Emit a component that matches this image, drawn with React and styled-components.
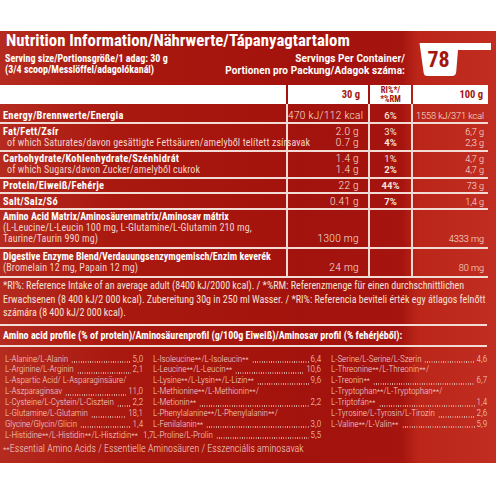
import React from 'react';
import styled, { createGlobalStyle } from 'styled-components';

const Global = createGlobalStyle`
  html, body { margin: 0; background: #fff; }
`;

const condensed = `
  font-family: Roboto, "Open Sans", "Liberation Sans", sans-serif;
  font-stretch: 75%;
`;

const LINE = '#f3dbd5';
const DARK = '#a3150f';

const Page = styled.div`
  width: 496px;
  height: 496px;
  padding-top: 31px;
  box-sizing: border-box;
  background: #fff;
`;

const Panel = styled.div`
  height: 432px;
  overflow: hidden;
  color: #fff;
  ${condensed};
  background: linear-gradient(
    90deg,
    #b52b20 0px,
    #aa190f 110px,
    #a3130d 300px,
    #a5140e 402px,
    #bb2619 418px,
    #c12d21 496px
  );
`;

const Header = styled.header`
  display: flex;
  align-items: flex-start;
  gap: 12px;
`;

const HeaderText = styled.div`
  width: 405px;
  flex: none;
`;

const Title = styled.h1`
  margin: 0;
  padding-left: 6px;
  font-size: 16.8px;
  line-height: 18px;
  font-weight: 700;
  white-space: nowrap;
`;

const ServingRow = styled.div`
  display: flex;
  justify-content: space-between;
  margin-top: 4px;
  padding-left: 5px;
  font-size: 10px;
  line-height: 11px;
  font-weight: 700;
  white-space: nowrap;
`;

const Servings = styled.div`
  text-align: right;
  font-stretch: 100%;
  font-size: 10px;
  line-height: 12px;
  letter-spacing: 0.1px;
`;

const Scoop = styled.div`
  position: relative;
  flex: none;
  width: 76px;
  height: 36px;
  margin-top: 11px;

  svg {
    display: block;
  }
`;

const Count = styled.span`
  position: absolute;
  left: 3px;
  top: 0;
  width: 37px;
  line-height: 35px;
  text-align: center;
  color: ${DARK};
  font-size: 22px;
  font-weight: 700;
`;

const Table = styled.div`
  width: 488px;
  margin-top: 7px;
  border-bottom: 2px solid ${LINE};
`;

const Row = styled.div`
  display: grid;
  grid-template-columns: 286px 82px 43px 77px;
  height: ${p => p.$h}px;
  border-top: ${p => (p.$first ? 'none' : `2px solid ${LINE}`)};
  box-sizing: content-box;
`;

const HeadCell = styled.div`
  background: #fff;
  background-clip: padding-box;
  border-left: ${p => (p.$first ? 0 : '2px solid transparent')};
  color: ${DARK};
  font-size: 10.5px;
  line-height: 19px;
  font-weight: 700;
  text-align: ${p => p.$align || 'right'};
  padding-right: ${p => p.$pr || 0}px;
`;

const RiHead = styled.div`
  padding-top: 0.5px;
  font-size: 8.6px;
  line-height: 9.2px;
  text-align: center;
`;

const Cell = styled.div`
  border-left: ${p => (p.$first ? 0 : `2px solid ${LINE}`)};
  padding-top: ${p => p.$pt}px;
  padding-right: ${p => p.$pr || 0}px;
  padding-left: ${p => p.$pl || 0}px;
  text-align: ${p => p.$align || 'right'};
  line-height: 11px;
  white-space: nowrap;
`;

const LabelLine = styled.div`
  height: 11px;
  font-size: ${p => (p.$main ? 10.4 : 10)}px;
  font-weight: ${p => (p.$bold ? 700 : 400)};
  letter-spacing: ${p => (p.$main ? 0.25 : p.$bold ? 0 : 0.12)}px;
  color: ${p => (p.$bold ? '#fff' : '#f3d3cc')};
  padding-left: ${p => (p.$indent ? 4 : 0)}px;
`;

const Value = styled.div`
  height: 11px;
  font-family: Roboto, "Liberation Sans", sans-serif;
  font-stretch: 100%;
  font-size: ${p => (p.$narrow ? 9.2 : 10)}px;
  letter-spacing: ${p => (p.$narrow ? -0.1 : 0.35)}px;
  font-weight: 300;
  color: #f7e4df;
`;

const Percent = styled.div`
  height: 11px;
  font-family: Roboto, "Liberation Sans", sans-serif;
  font-stretch: 100%;
  font-size: 9.5px;
  font-weight: ${p => p.$w};
  color: #f7e4df;
`;

const Footnote = styled.p`
  margin: 1px 0 0;
  padding-left: 3px;
  font-size: 10px;
  line-height: 13.5px;
  font-weight: 400;
  color: #f6e0da;
  white-space: nowrap;
`;

const ProfileHead = styled.div`
  width: 487px;
  margin-top: 4px;
  padding-left: 3px;
  box-sizing: border-box;
  border-top: 2px solid ${LINE};
  border-bottom: 2px solid ${LINE};
  font-size: 10px;
  line-height: 19px;
  font-weight: 700;
  white-space: nowrap;
`;

const Profile = styled.div`
  display: grid;
  grid-template-columns: 138px 168px 156px;
  column-gap: 10px;
  margin-top: 7px;
  padding-left: 5px;
  align-items: start;
`;

const AminoLine = styled.div`
  display: flex;
  align-items: baseline;
  height: 10.9px;
  line-height: 10.9px;
  font-size: 9.2px;
  letter-spacing: -0.1px;
  font-weight: 300;
  color: #f3d5ce;
  white-space: nowrap;
`;

const Star = styled.span`
  font-size: 8px;
  letter-spacing: -0.25px;
  padding-right: 0.5px;
`;

const Dots = styled.span`
  flex: 1;
  align-self: stretch;
  margin: 0 2px 0 3px;
  background-image: radial-gradient(circle, #e4afa4 0.55px, transparent 0.9px);
  background-size: 2.3px 2px;
  background-repeat: repeat-x;
  background-position: left 7.6px;
`;

const Essential = styled.p`
  margin: 2px 0 0;
  padding-left: 3px;
  font-size: 10px;
  line-height: 11px;
  font-weight: 300;
  color: #f3d5ce;
`;

const rows = [
  {
    label: [{ t: 'Energy/Brennwerte/Energia', bold: true, main: true }],
    v30: ['470 kJ/112 kcal'],
    ri: [{ t: '6%', w: 500 }],
    v100: ['1558 kJ/371 kcal'],
    h: 18,
    pt: 6,
  },
  {
    label: [
      { t: 'Fat/Fett/Zsír', bold: true, main: true },
      { t: 'of which Saturates/davon gesättigte Fettsäuren/amelyből telített zsírsavak', indent: true },
    ],
    v30: ['2.0 g', '0.7 g'],
    ri: [{ t: '3%', w: 400 }, { t: '4%', w: 700 }],
    v100: ['6,7 g', '2,3 g'],
    h: 26,
    pt: 2,
  },
  {
    label: [
      { t: 'Carbohydrate/Kohlenhydrate/Szénhidrát', bold: true, main: true },
      { t: 'of which Sugars/davon Zucker/amelyből cukrok', indent: true },
    ],
    v30: ['1.4 g', '1.4 g'],
    ri: [{ t: '1%', w: 400 }, { t: '2%', w: 700 }],
    v100: ['4,7 g', '4,7 g'],
    h: 25,
    pt: 1,
  },
  {
    label: [{ t: 'Protein/Eiweiß/Fehérje', bold: true, main: true }],
    v30: ['22 g'],
    ri: [{ t: '44%', w: 700 }],
    v100: ['73 g'],
    h: 13,
    pt: 1,
  },
  {
    label: [{ t: 'Salt/Salz/Só', bold: true, main: true }],
    v30: ['0.41 g'],
    ri: [{ t: '7%', w: 700 }],
    v100: ['1,4 g'],
    h: 14,
    pt: 2,
  },
  {
    label: [
      { t: 'Amino Acid Matrix/Aminosäurenmatrix/Aminosav mátrix', bold: true },
      { t: '(L-Leucine/L-Leucin 100 mg, L-Glutamine/L-Glutamin 210 mg,' },
      { t: 'Taurine/Taurin 990 mg)' },
    ],
    v30: ['', '', '1300 mg'],
    ri: [],
    v100: ['', '', '4333 mg'],
    h: 37,
    pt: 1,
  },
  {
    label: [
      { t: 'Digestive Enzyme Blend/Verdauungsenzymgemisch/Enzim keverék', bold: true },
      { t: '(Bromelain 12 mg, Papain 12 mg)' },
    ],
    v30: ['', '24 mg'],
    ri: [],
    v100: ['', '80 mg'],
    h: 27,
    pt: 2,
  },
];

const footnote = [
  '*RI%: Reference Intake of an average adult (8400 kJ/2000 kcal). / *%RM: Referenzmenge für einen durchschnittlichen',
  'Erwachsenen (8 400 kJ/2 000 kcal). Zubereitung 30g in 250 ml Wasser. / *RI%: Referencia beviteli érték egy átlagos felnőtt',
  'számára (8 400 kJ/2 000 kcal).',
];

const amino = [
  [
    { lines: ['L-Alanine/L-Alanin'], value: '5,0' },
    { lines: ['L-Arginine/L-Arginin'], value: '2,1' },
    { lines: ['L-Aspartic Acid/ L-Asparaginsäure/', 'L-Aszparaginsav'], value: '11,0' },
    { lines: ['L-Cysteine/L-Cystein/L-Cisztein'], value: '2,2' },
    { lines: ['L-Glutamine/L-Glutamin'], value: '18,1' },
    { lines: ['Glycine/Glycin/Glicin'], value: '1,4' },
    { lines: ['L-Histidine**/L-Histidin**/L-Hisztidin**'], value: '1,7' },
  ],
  [
    { lines: ['L-Isoleucine**/L-Isoleucin**'], value: '6,4' },
    { lines: ['L-Leucine**/L-Leucin**'], value: '10,6' },
    { lines: ['L-Lysine**/L-Lysin**/L-Lizin**'], value: '9,6' },
    { lines: ['L-Methionine**/L-Methionin**/', 'L-Metionin**'], value: '2,2' },
    { lines: ['L-Phenylalanine**/L-Phenylalanin**/', 'L-Fenilalanin**'], value: '3,0' },
    { lines: ['L-Proline/L-Prolin'], value: '5,5' },
  ],
  [
    { lines: ['L-Serine/L-Serine/L-Szerin'], value: '4,6' },
    { lines: ['L-Threonine**/L-Threonin**/', 'L-Treonin**'], value: '6,7' },
    { lines: ['L-Tryptophan**/L-Tryptophan**/', 'L-Triptofán**'], value: '1,4' },
    { lines: ['L-Tyrosine/L-Tyrosin/L-Tirozin'], value: '2,6' },
    { lines: ['L-Valine**/L-Valin**'], value: '5,9' },
  ],
];

// asterisks on the label are set small and tight, as printed
const withStars = text =>
  text.split('**').map((part, i, all) => (
    <React.Fragment key={i}>
      {part}
      {i < all.length - 1 && <Star>**</Star>}
    </React.Fragment>
  ));

const ScoopIcon = () => (
  <svg width="76" height="36" viewBox="0 0 76 36">
    <path
      d="M2.5 1 H74 V8 H41 L39.2 30 Q38.8 34 35 34 H10.5 Q7 34 6.6 30.5 Z"
      fill="#fff"
    />
  </svg>
);

const AminoEntry = ({ lines, value }) => (
  <>
    {lines.slice(0, -1).map(line => (
      <AminoLine key={line}>{withStars(line)}</AminoLine>
    ))}
    <AminoLine>
      <span>{withStars(lines[lines.length - 1])}</span>
      <Dots />
      <span>{value}</span>
    </AminoLine>
  </>
);

export default function App() {
  return (
    <Page>
      <Global />
      <Panel>
        <Header>
          <HeaderText>
            <Title>Nutrition Information/Nährwerte/Tápanyagtartalom</Title>
            <ServingRow>
              <div>
                <div>Serving size/Portionsgröße/1 adag: 30 g</div>
                <div>(3/4 scoop/Messlöffel/adagolókanál)</div>
              </div>
              <Servings>
                <div>Servings Per Container/</div>
                <div>Portionen pro Packung/Adagok száma:</div>
              </Servings>
            </ServingRow>
          </HeaderText>
          <Scoop>
            <ScoopIcon />
            <Count>78</Count>
          </Scoop>
        </Header>

        <Table>
          <Row $h={19} $first>
            <HeadCell $first />
            <HeadCell $pr={8}>30 g</HeadCell>
            <HeadCell $align="center">
              <RiHead>
                RI%*/
                <br />
                *%RM
              </RiHead>
            </HeadCell>
            <HeadCell $pr={5}>100 g</HeadCell>
          </Row>
          {rows.map((row, i) => (
            <Row key={row.label[0].t} $h={row.h} $first={i === 0}>
              <Cell $first $pt={row.pt} $pl={3} $align="left">
                {row.label.map(line => (
                  <LabelLine
                    key={line.t}
                    $bold={line.bold}
                    $main={line.main}
                    $indent={line.indent}
                  >
                    {line.t}
                  </LabelLine>
                ))}
              </Cell>
              <Cell $pt={row.pt} $pr={9}>
                {row.v30.map((v, j) => (
                  <Value key={j}>{v}</Value>
                ))}
              </Cell>
              <Cell $pt={row.pt} $align="center">
                {row.ri.map(p => (
                  <Percent key={p.t} $w={p.w}>
                    {p.t}
                  </Percent>
                ))}
              </Cell>
              <Cell $pt={row.pt} $pr={4}>
                {row.v100.map((v, j) => (
                  <Value key={j} $narrow>
                    {v}
                  </Value>
                ))}
              </Cell>
            </Row>
          ))}
        </Table>

        <Footnote>
          {footnote.map(line => (
            <React.Fragment key={line}>
              {line}
              <br />
            </React.Fragment>
          ))}
        </Footnote>

        <ProfileHead>
          Amino acid profile (% of protein)/Aminosäurenprofil (g/100g Eiweiß)/Aminosav profil (% fehérjéből):
        </ProfileHead>

        <Profile>
          {amino.map((col, i) => (
            <div key={i}>
              {col.map(entry => (
                <AminoEntry key={entry.lines[0]} {...entry} />
              ))}
            </div>
          ))}
        </Profile>

        <Essential>{withStars('**Essential Amino Acids / Essentielle Aminosäuren / Esszenciális aminosavak')}</Essential>
      </Panel>
    </Page>
  );
}
